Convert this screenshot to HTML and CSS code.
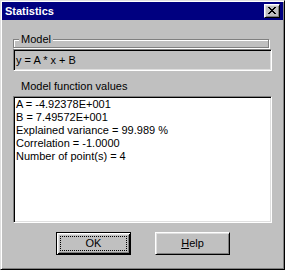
FILE: index.html
```html
<!DOCTYPE html>
<html lang="en">
<head>
    <meta charset="UTF-8">
    <title>Statistics</title>
    <link rel="stylesheet" href="styles.css">
</head>
<body>
    <div class="window">
        <div class="titlebar">
            <span class="title">Statistics</span>
            <button class="close" type="button">
                <svg width="8" height="7" viewBox="0 0 8 7" shape-rendering="crispEdges">
                    <path fill="#000" d="M0 0h2v1H0zM6 0h2v1H6zM1 1h2v1H1zM5 1h2v1H5zM2 2h4v1H2zM3 3h2v1H3zM2 4h4v1H2zM1 5h2v1H1zM5 5h2v1H5zM0 6h2v1H0zM6 6h2v1H6z"/>
                </svg>
            </button>
        </div>
        <div class="content">
            <fieldset class="group">
                <legend>Model</legend>
            </fieldset>
            <div class="model-field">y = A * x + B</div>

            <div class="values-label">Model function values</div>
            <div class="values">
                <div>A = -4.92378E+001</div>
                <div>B = 7.49572E+001</div>
                <div>Explained variance = 99.989 %</div>
                <div>Correlation = -1.0000</div>
                <div>Number of point(s) = 4</div>
            </div>

            <div class="buttons">
                <button class="btn default" type="button">OK</button>
                <button class="btn" type="button"><u>H</u>elp</button>
            </div>
        </div>
    </div>
</body>
</html>
```

FILE: styles.css
```css
body {
    margin: 0;
    background-color: #c0c0c0;
}
.window {
    width: 285px;
    height: 270px;
    box-sizing: border-box;
    background-color: #c0c0c0;
    border: 1px solid;
    border-color: #dfdfdf #000 #000 #dfdfdf;
    box-shadow: inset 1px 1px #fff, inset -1px -1px #808080;
    padding: 1px;
    display: flex;
    flex-direction: column;
    font-family: "Liberation Sans", Arial, sans-serif;
    font-size: 11px;
    line-height: 13px;
    color: #000;
}
.titlebar {
    height: 18px;
    flex-shrink: 0;
    background-color: #000080;
    color: #fff;
    font-weight: bold;
    display: flex;
    align-items: center;
    justify-content: space-between;
    padding: 0 3px 0 3px;
}
.close {
    width: 16px;
    height: 14px;
    box-sizing: border-box;
    padding: 0;
    margin: 0;
    border: 1px solid;
    border-color: #fff #000 #000 #fff;
    box-shadow: inset 1px 1px #dfdfdf, inset -1px -1px #808080;
    background-color: #c0c0c0;
    display: flex;
    align-items: flex-start;
    justify-content: flex-start;
}
.close svg {
    display: block;
    margin: 2px 0 0 3px;
}
.content {
    padding: 0 11px;
    display: flex;
    flex-direction: column;
}
.group {
    margin: 13px 0 0;
    padding: 0 0 1px;
    width: 256px;
    box-sizing: border-box;
    border: 1px solid #808080;
    box-shadow: inset 1px 1px #fff, 1px 1px #fff;
    min-inline-size: 0;
}
.group legend {
    margin-left: 5px;
    padding: 0 2px;
    background-color: #c0c0c0;
    line-height: 13px;
}
.model-field {
    margin-top: 1px;
    height: 22px;
    box-sizing: border-box;
    border: 1px solid;
    border-color: #808080 #fff #fff #808080;
    box-shadow: inset 1px 1px #000, inset -1px -1px #dfdfdf;
    padding: 0 2px;
    display: flex;
    align-items: center;
}
.values-label {
    margin-top: 9px;
    padding-left: 8px;
}
.values {
    margin-top: 3px;
    height: 127px;
    box-sizing: border-box;
    border: 1px solid;
    border-color: #808080 #fff #fff #808080;
    box-shadow: inset 1px 1px #000, inset -1px -1px #dfdfdf;
    background-color: #fff;
    padding: 1px 2px;
}
.buttons {
    margin-top: 9px;
    padding-left: 1px;
    display: flex;
    justify-content: center;
    gap: 24px;
}
.btn {
    width: 75px;
    height: 23px;
    box-sizing: border-box;
    margin: 0;
    padding: 0;
    font: inherit;
    color: #000;
    background-color: #c0c0c0;
    border: 1px solid;
    border-color: #fff #000 #000 #fff;
    box-shadow: inset 1px 1px #dfdfdf, inset -1px -1px #808080;
}
.btn u {
    text-decoration-thickness: 1px;
}
.btn.default {
    border: 1px solid #000;
    box-shadow: inset 1px 1px #fff, inset -1px -1px #000, inset 2px 2px #dfdfdf, inset -2px -2px #808080;
    outline: 1px dotted #000;
    outline-offset: -5px;
}
```
